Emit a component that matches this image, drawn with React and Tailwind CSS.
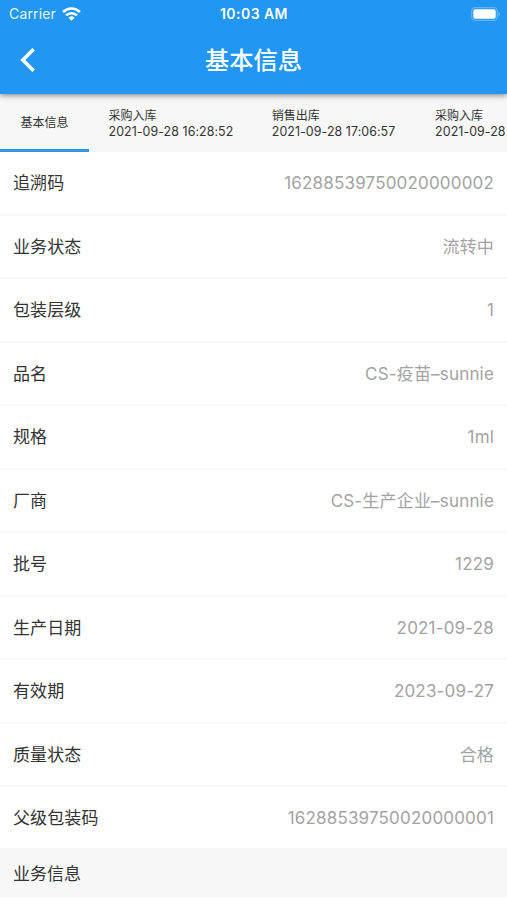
const details = [
  { label: "追溯码", value: "16288539750020000002" },
  { label: "业务状态", value: "流转中" },
  { label: "包装层级", value: "1" },
  { label: "品名", value: "CS-疫苗–sunnie" },
  { label: "规格", value: "1ml" },
  { label: "厂商", value: "CS-生产企业–sunnie" },
  { label: "批号", value: "1229" },
  { label: "生产日期", value: "2021-09-28" },
  { label: "有效期", value: "2023-09-27" },
  { label: "质量状态", value: "合格" },
  { label: "父级包装码", value: "16288539750020000001" },
];

const records = [
  { type: "采购入库", time: "2021-09-28 16:28:52" },
  { type: "销售出库", time: "2021-09-28 17:06:57" },
  { type: "采购入库", time: "2021-09-28" },
];

const WifiIcon = () => (
  <svg className="w-[19px] h-[14px]" viewBox="0 0 19 14" fill="none" stroke="white" strokeWidth="2.6">
    <path d="M1.1 5a12 12 0 0 1 16.8 0" />
    <path d="M4.1 8.4a7.8 7.8 0 0 1 10.8 0" />
    <path d="M9.5 13.8L6.5 10.8a4.3 4.3 0 0 1 6 0z" fill="white" stroke="none" />
  </svg>
);

const BatteryIcon = () => (
  <svg className="w-[30px] h-[14px]" viewBox="0 0 30 14">
    <rect x="0.7" y="0.7" width="25.6" height="12.6" rx="3.6" fill="none" stroke="white" strokeOpacity="0.3" strokeWidth="1.2" />
    <rect x="2.3" y="2.3" width="22.4" height="9.4" rx="2.2" fill="white" />
    <path d="M27.6 4.8v4.4c1.8-.8 1.8-3.6 0-4.4z" fill="white" fillOpacity="0.4" />
  </svg>
);

const Header = () => (
  <header className="relative z-10 h-[94px] bg-[#2196f3] text-white shadow-[0_2px_5px_rgba(0,0,0,0.4)]">
    <div className="grid grid-cols-3 items-center h-[27px] pl-[9px] pr-[6px] text-[14px]">
      <div className="flex items-center gap-[6px]">
        <span className="text-white/90 tracking-[0.15px]">Carrier</span>
        <WifiIcon />
      </div>
      <span className="pr-[2px] text-center font-semibold tracking-[0.45px]">10:03 AM</span>
      <div className="flex justify-end">
        <BatteryIcon />
      </div>
    </div>

    <div className="grid grid-cols-[80px_1fr_80px] items-center h-[66px]">
      <button className="pl-[20px]" aria-label="返回">
        <svg className="w-[16px] h-[24px]" viewBox="0 0 16 24" fill="none" stroke="white" strokeWidth="3.6">
          <path d="M13.6 1.2L2.8 12l10.8 10.8" />
        </svg>
      </button>
      <h1 className="text-center text-[24.3px] font-medium pt-px">基本信息</h1>
    </div>
  </header>
);

const Tabs = () => (
  <nav className="flex h-[58px] overflow-hidden bg-[#f7f7f7] text-[12px] leading-[16px] text-[#333]">
    <button className="shrink-0 w-[89px] border-b-[3px] border-[#2e97ec] pt-[3px]">基本信息</button>
    <div className="flex pl-[19.5px]">
      {records.map((item, index) => (
        <button
          key={index}
          className="w-[163.3px] shrink-0 pt-[2px] text-left whitespace-nowrap last:w-auto"
        >
          <p>{item.type}</p>
          <p className="text-[12.4px] tracking-[0.08px]">{item.time}</p>
        </button>
      ))}
    </div>
  </nav>
);

const App = () => {
  return (
    <div className="w-full h-[900px] overflow-hidden bg-white font-['Inter','Noto_Sans_CJK_SC',sans-serif]">
      <Header />
      <Tabs />

      <div>
        {details.map((item) => (
          <div
            key={item.label}
            className="flex items-center justify-between h-[63.5px] pt-[2px] px-[13px] border-b-2 border-[#f7f7f7] text-[17px] last:h-[61px] last:border-0"
          >
            <span className="text-[#333] tracking-[0.1px]">{item.label}</span>
            <span className="text-[#a3a3a3] tracking-[0.18px]">{item.value}</span>
          </div>
        ))}
      </div>

      <h2 className="flex items-center h-[49px] pt-[4px] px-[13px] bg-[#f7f7f7] text-[17px] text-[#333]">业务信息</h2>
    </div>
  );
};

export default App;
